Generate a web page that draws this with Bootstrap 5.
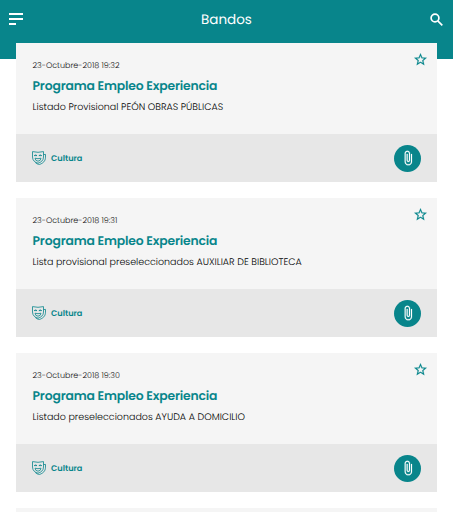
<!DOCTYPE html>
<html lang="es">
<head>
<meta charset="utf-8">
<meta name="viewport" content="width=device-width, initial-scale=1">
<title>Bandos</title>
<link href="https://cdn.jsdelivr.net/npm/bootstrap@5.3.0/dist/css/bootstrap.min.css" rel="stylesheet">
<style>
:root{--teal:#08858b}
body{font-family:Poppins,Inter,"Open Sans",sans-serif;color:#222;text-rendering:geometricPrecision}
.screen{height:512px;background:linear-gradient(var(--teal) 59.5px,#fff 59.5px)}
.topbar{height:43px;padding:0 10px 5px 9px}
.topbar h1{font-size:13.5px;line-height:20px;font-weight:400;padding-top:2px}
.notices{padding:0 16px;gap:16px}
.notice{--bs-card-bg:#f5f5f5;height:139px}
.notice-main{height:91px;padding:16px 9px 0 16.5px}
.date{font-size:8px;line-height:13px;font-weight:300;color:#111}
.heading{font-size:12.4px;line-height:18px;font-weight:600;letter-spacing:-.17px;color:var(--teal);margin:6px 0 4px}
.detail{font-size:9.5px;line-height:15px;font-weight:300;color:#000}
.star{margin-top:-7px}
.notice-foot{height:48px;background:#e7e7e7;padding:0 16px}
.tag{font-size:8.2px;font-weight:600;color:var(--teal);gap:5px}
.clip{width:27px;height:27px;background:var(--teal)}
svg{display:block;flex:none}
</style>
<script src="https://cdn.jsdelivr.net/npm/bootstrap@5.3.0/dist/js/bootstrap.bundle.min.js"></script>
</head>
<body>
<svg width="0" height="0" class="d-none">
  <symbol id="i-star" viewBox="0 0 24 24"><path fill="#08858b" stroke="#08858b" stroke-width=".3" d="M22 9.24l-7.19-.62L12 2 9.19 8.63 2 9.24l5.46 4.73L5.82 21 12 17.27 18.18 21l-1.63-7.03L22 9.24zM12 15.4l-3.76 2.27 1-4.28-3.32-2.88 4.38-.38L12 6.1l1.71 4.04 4.38.38-3.32 2.88 1 4.28L12 15.4z"/></symbol>
  <symbol id="i-clip" viewBox="0 0 24 24"><path fill="#fff" stroke="#fff" stroke-width=".3" d="M16.5 6v11.5c0 2.21-1.79 4-4 4s-4-1.79-4-4V5a2.5 2.5 0 0 1 5 0v10.5c0 .55-.45 1-1 1s-1-.45-1-1V6H10v9.5a2.5 2.5 0 0 0 5 0V5c0-2.21-1.79-4-4-4S7 2.79 7 5v12.5c0 3.04 2.46 5.5 5.5 5.5s5.5-2.46 5.5-5.5V6h-1.5z"/></symbol>
  <symbol id="i-mask" viewBox="0 0 14 14"><g fill="none" stroke="#08858b" stroke-width=".8"><path d="M.5.6Q6 2 11.5.6v5.400c0 3.500-2.600 5.500-5.500 6.200C3 11.500.5 9.500.5 6z"/><path d="M11.600 3.600l1.900-.2v2.800c0 4-2.500 6-6 7.300-2-.3-3.200-1-4.200-2"/><path d="M2.200 4.600q1.400-1.300 2.800 0zM6.900 4.600q1.400-1.300 2.800 0z"/><path d="M3 7.200q3 1 6 0-.3 2.800-3 3-2.700-.2-3-3z"/></g></symbol>
</svg>
<div class="screen overflow-hidden">
  <nav class="topbar d-flex align-items-center justify-content-between text-white">
    <svg width="14" height="14" viewBox="0 0 14 14" fill="#fff"><path d="M0 1h14v2H0zM0 6h14v2H0zM0 11h7v2H0z"/></svg>
    <h1 class="mb-0">Bandos</h1>
    <svg width="13" height="13" viewBox="0 0 13 13" fill="none" stroke="#fff" stroke-width="1.7"><circle cx="5" cy="5" r="3.9"/><path d="M7.8 7.8l4.500 4.500"/></svg>
  </nav>
  <main class="notices d-flex flex-column">
    <article class="notice card border-0 rounded-0 flex-shrink-0">
      <div class="notice-main d-flex justify-content-between">
        <div class="text-nowrap"><div class="date">23-Octubre-2018 19:32</div><h2 class="heading">Programa Empleo Experiencia</h2><p class="detail m-0">Listado Provisional PEÓN OBRAS PÚBLICAS</p></div>
        <svg class="star" width="15" height="15"><use href="#i-star"/></svg>
      </div>
      <div class="notice-foot d-flex align-items-center justify-content-between">
        <div class="tag d-flex align-items-center"><svg width="14" height="14"><use href="#i-mask"/></svg><span>Cultura</span></div>
        <span class="clip rounded-circle d-flex align-items-center justify-content-center"><svg width="16" height="16"><use href="#i-clip"/></svg></span>
      </div>
    </article>
    <article class="notice card border-0 rounded-0 flex-shrink-0">
      <div class="notice-main d-flex justify-content-between">
        <div class="text-nowrap"><div class="date">23-Octubre-2018 19:31</div><h2 class="heading">Programa Empleo Experiencia</h2><p class="detail m-0">Lista provisional preseleccionados AUXILIAR DE BIBLIOTECA</p></div>
        <svg class="star" width="15" height="15"><use href="#i-star"/></svg>
      </div>
      <div class="notice-foot d-flex align-items-center justify-content-between">
        <div class="tag d-flex align-items-center"><svg width="14" height="14"><use href="#i-mask"/></svg><span>Cultura</span></div>
        <span class="clip rounded-circle d-flex align-items-center justify-content-center"><svg width="16" height="16"><use href="#i-clip"/></svg></span>
      </div>
    </article>
    <article class="notice card border-0 rounded-0 flex-shrink-0">
      <div class="notice-main d-flex justify-content-between">
        <div class="text-nowrap"><div class="date">23-Octubre-2018 19:30</div><h2 class="heading">Programa Empleo Experiencia</h2><p class="detail m-0">Listado preseleccionados AYUDA A DOMICILIO</p></div>
        <svg class="star" width="15" height="15"><use href="#i-star"/></svg>
      </div>
      <div class="notice-foot d-flex align-items-center justify-content-between">
        <div class="tag d-flex align-items-center"><svg width="14" height="14"><use href="#i-mask"/></svg><span>Cultura</span></div>
        <span class="clip rounded-circle d-flex align-items-center justify-content-center"><svg width="16" height="16"><use href="#i-clip"/></svg></span>
      </div>
    </article>
    <article class="notice card border-0 rounded-0 flex-shrink-0"></article>
  </main>
</div>
</body>
</html>
